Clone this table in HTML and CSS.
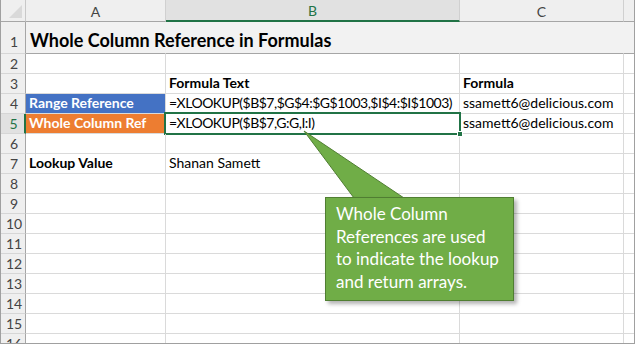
FILE: index.html
```html
<!DOCTYPE html>
<html>
<head>
<meta charset="utf-8">
<link rel="stylesheet" href="styles.css">
</head>
<body>
<div class="sheet">
  <div class="corner"><span class="tri"></span></div>
  <div class="colhead">A</div>
  <div class="colhead sel">B</div>
  <div class="colhead">C</div>
  <div class="colhead last"></div>

  <div class="rowhead r1">1</div>
  <div class="cell title r1">Whole Column Reference in Formulas</div>
  <div class="cell r1"></div>
  <div class="cell r1"></div>
  <div class="cell r1 last"></div>

  <div class="rowhead">2</div>
  <div class="cell"></div><div class="cell"></div><div class="cell"></div><div class="cell last"></div>

  <div class="rowhead">3</div>
  <div class="cell"></div>
  <div class="cell bold">Formula Text</div>
  <div class="cell bold">Formula</div>
  <div class="cell last"></div>

  <div class="rowhead">4</div>
  <div class="cell blue">Range Reference</div>
  <div class="cell formula">=XLOOKUP($B$7,$G$4:$G$1003,$I$4:$I$1003)</div>
  <div class="cell">ssamett6@delicious.com</div>
  <div class="cell last"></div>

  <div class="rowhead sel">5</div>
  <div class="cell orange">Whole Column Ref</div>
  <div class="cell formula active">=XLOOKUP($B$7,G:G,I:I)<span class="handle"></span></div>
  <div class="cell">ssamett6@delicious.com</div>
  <div class="cell last"></div>

  <div class="rowhead">6</div>
  <div class="cell"></div><div class="cell"></div><div class="cell"></div><div class="cell last"></div>

  <div class="rowhead">7</div>
  <div class="cell bold">Lookup Value</div>
  <div class="cell">Shanan Samett</div>
  <div class="cell"></div><div class="cell last"></div>

  <div class="rowhead">8</div>
  <div class="cell"></div><div class="cell"></div><div class="cell"></div><div class="cell last"></div>
  <div class="rowhead">9</div>
  <div class="cell"></div><div class="cell"></div><div class="cell"></div><div class="cell last"></div>
  <div class="rowhead">10</div>
  <div class="cell"></div><div class="cell"></div><div class="cell"></div><div class="cell last"></div>
  <div class="rowhead">11</div>
  <div class="cell"></div><div class="cell"></div><div class="cell"></div><div class="cell last"></div>
  <div class="rowhead">12</div>
  <div class="cell"></div><div class="cell"></div><div class="cell"></div><div class="cell last"></div>
  <div class="rowhead">13</div>
  <div class="cell"></div><div class="cell"></div><div class="cell"></div><div class="cell last"></div>
  <div class="rowhead">14</div>
  <div class="cell"></div><div class="cell"></div><div class="cell"></div><div class="cell last"></div>
  <div class="rowhead">15</div>
  <div class="cell"></div><div class="cell"></div><div class="cell"></div><div class="cell last"></div>
  <div class="rowhead">16</div>
  <div class="cell"></div><div class="cell"></div><div class="cell"></div><div class="cell last"></div>

  <svg class="pointer" width="120" height="80" viewBox="0 0 120 80">
    <polygon points="3,1 53,68 103,68" fill="#70ad47" stroke="#507e32" stroke-width="1"/>
  </svg>
  <div class="callout">Whole Column<br>References are used<br>to indicate the lookup<br>and return arrays.</div>
</div>
</body>
</html>
```
FILE: styles.css
```css
* { box-sizing: border-box; }
html, body { margin: 0; padding: 0; background: #ffffff; }
body {
  width: 635px;
  height: 345px;
  overflow: hidden;
  font-family: Lato, "Liberation Sans", sans-serif;
}
.sheet {
  position: relative;
  width: 635px;
  height: 344px;
  border-left: 1px solid #a0a0a0;
  border-right: 1px solid #a0a0a0;
  border-bottom: 1px solid #a0a0a0;
  display: grid;
  grid-template-columns: 25px 140px 294px 164px 10px;
  grid-template-rows: 22px 32px repeat(15, 20px);
  overflow: hidden;
}
.corner {
  position: relative;
  background: #efefef;
  border-right: 1px solid #c8c8c8;
  border-bottom: 1px solid #a6a6a6;
}
.tri {
  position: absolute;
  right: 3px;
  bottom: 3px;
  width: 0;
  height: 0;
  border-left: 13px solid transparent;
  border-bottom: 13px solid #d9d9d9;
}
.colhead {
  background: #efefef;
  border-right: 1px solid #d0d0d0;
  border-bottom: 1px solid #a6a6a6;
  display: flex;
  align-items: center;
  justify-content: center;
  font-size: 14px;
  color: #444444;
  padding-top: 1px;
}
.colhead.sel {
  background: #e1e1e1;
  color: #217346;
  border-bottom: 2px solid #217346;
}
.colhead.last { border-right: none; }
.rowhead {
  background: #efefef;
  border-right: 1px solid #a6a6a6;
  border-bottom: 1px solid #d6d6d6;
  display: flex;
  align-items: flex-end;
  justify-content: center;
  font-size: 14px;
  color: #444444;
  padding-bottom: 1px;
  padding-left: 2px;
}
.rowhead.sel {
  background: #e1e1e1;
  color: #217346;
  border-right: 2px solid #217346;
}
.rowhead.r1 { padding-bottom: 3px; }
.cell {
  position: relative;
  border-right: 1px solid #dadada;
  border-bottom: 1px solid #dadada;
  font-size: 14px;
  color: #000000;
  white-space: nowrap;
  display: flex;
  align-items: flex-end;
  padding: 0 0 1px 3px;
  line-height: 18px;
}
.cell.last { border-right: none; }
.cell.r1 {
  background: #f2f2f2;
  border-right-color: #f2f2f2;
  border-bottom: 1px solid #a6a6a6;
}
.cell.title {
  font-size: 18px;
  font-weight: 700;
  padding-left: 4px;
  padding-bottom: 4px;
  overflow: visible;
  z-index: 1;
}
.formula { letter-spacing: -0.5px; }
.bold { font-weight: 700; }
.blue {
  background: #4472c4;
  color: #ffffff;
  font-weight: 700;
}
.orange {
  background: #ed7d31;
  color: #ffffff;
  font-weight: 700;
}
.active::before {
  content: "";
  position: absolute;
  left: -2px;
  top: -2px;
  right: -2px;
  bottom: -2px;
  border: 2px solid #217346;
  pointer-events: none;
}
.handle {
  position: absolute;
  right: -4px;
  bottom: -4px;
  width: 6px;
  height: 6px;
  background: #217346;
  border: 1px solid #ffffff;
  z-index: 2;
}
.pointer {
  position: absolute;
  left: 300px;
  top: 130px;
  z-index: 3;
}
.callout {
  position: absolute;
  left: 324px;
  top: 197px;
  width: 189px;
  height: 104px;
  background: #70ad47;
  border: 1px solid #507e32;
  color: #ffffff;
  font-size: 17px;
  line-height: 22.5px;
  padding: 5px 2px 0 10px;
  white-space: nowrap;
  box-shadow: 3px 3px 4px rgba(0, 0, 0, 0.3);
  z-index: 4;
}
```
